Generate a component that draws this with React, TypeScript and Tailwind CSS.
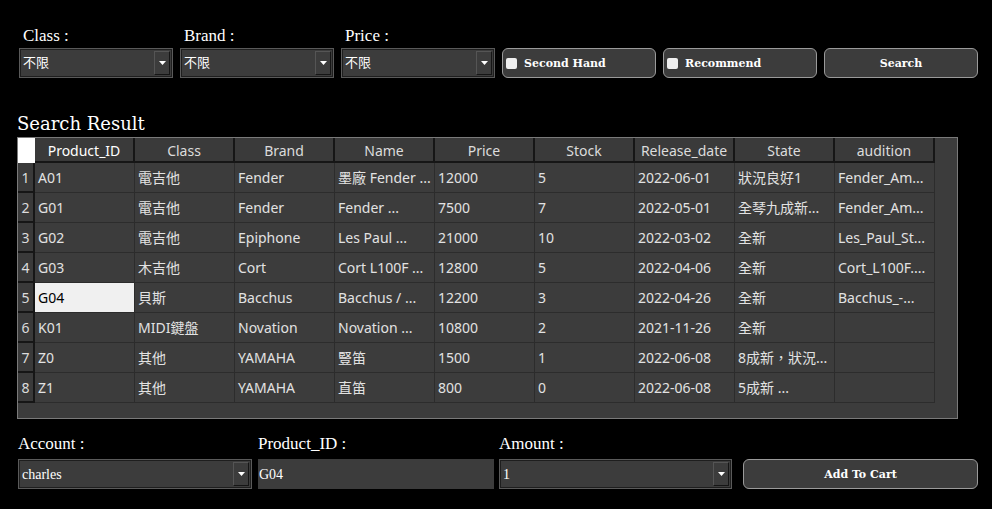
import React from "react";

const serif = { fontFamily: '"Liberation Serif", "Noto Sans CJK TC", serif' };
const bserif = { fontFamily: '"DejaVu Serif", "Liberation Serif", serif' };
const sans = { fontFamily: '"Noto Sans", "Noto Sans CJK TC", sans-serif' };

function Arrow() {
  return (
    <div className="flex h-full w-[16px] items-center justify-center border-l border-t border-l-[#555] border-t-[#555] border-r border-b border-r-[#151515] border-b-[#151515] bg-[#3c3c3c]">
      <svg width="7" height="4" viewBox="0 0 7 4">
        <polygon points="0,0 7,0 3.5,4" fill="#fff" />
      </svg>
    </div>
  );
}

function Combo({ value, width, small }: { value: string; width: string; small?: boolean }) {
  return (
    <div className={`${width} h-[30px] border border-[#5a5a5a] bg-[#5a5a5a]`}>
      <div className="flex h-full items-stretch border border-[#1e1e1e] bg-[#3c3c3c]">
        <div
          className={`flex flex-1 items-center pl-[2px] text-white ${small ? "text-[14px]" : "text-[13px]"}`}
          style={serif}
        >
          {value}
        </div>
        <div className="py-[1px] pr-[1px]">
          <Arrow />
        </div>
      </div>
    </div>
  );
}

function Btn({ label, check, width }: { label: string; check?: boolean; width: string }) {
  return (
    <div
      className={`${width} flex h-[30px] items-center rounded-[6px] border border-[#9a9a9a] bg-[#3c3c3c] text-[11px] font-bold text-white ${
        check ? "justify-start pl-[3px]" : "justify-center"
      }`}
      style={bserif}
    >
      {check && <div className="mr-[7px] h-[11px] w-[11px] rounded-[2px] bg-[#efefef]" />}
      <span className="pt-[2px]">{label}</span>
    </div>
  );
}

const headers = ["Product_ID", "Class", "Brand", "Name", "Price", "Stock", "Release_date", "State", "audition"];
const rows = [
  ["A01", "電吉他", "Fender", "墨廠 Fender ...", "12000", "5", "2022-06-01", "狀況良好1", "Fender_Am..."],
  ["G01", "電吉他", "Fender", "Fender ...", "7500", "7", "2022-05-01", "全琴九成新...", "Fender_Am..."],
  ["G02", "電吉他", "Epiphone", "Les Paul ...", "21000", "10", "2022-03-02", "全新", "Les_Paul_St..."],
  ["G03", "木吉他", "Cort", "Cort L100F ...", "12800", "5", "2022-04-06", "全新", "Cort_L100F...."],
  ["G04", "貝斯", "Bacchus", "Bacchus / ...", "12200", "3", "2022-04-26", "全新", "Bacchus_-..."],
  ["K01", "MIDI鍵盤", "Novation", "Novation ...", "10800", "2", "2021-11-26", "全新", ""],
  ["Z0", "其他", "YAMAHA", "豎笛", "1500", "1", "2022-06-08", "8成新，狀況...", ""],
  ["Z1", "其他", "YAMAHA", "直笛", "800", "0", "2022-06-08", "5成新 ...", ""],
];

export default function App() {
  return (
    <div className="h-[509px] w-[992px] overflow-hidden bg-black">
      {/* Top filters */}
      <div className="flex items-end gap-[7px] pl-[19px] pt-[26px]">
        {[
          ["Class :", "不限"],
          ["Brand :", "不限"],
          ["Price :", "不限"],
        ].map(([l, v]) => (
          <div key={l} className="flex flex-col">
            <div className="h-[22px] pl-[4px] text-[17px] leading-[20px] text-white" style={serif}>
              {l}
            </div>
            <Combo value={v} width="w-[154px]" />
          </div>
        ))}
        <Btn label="Second Hand" check width="w-[154px]" />
        <Btn label="Recommend" check width="w-[154px]" />
        <Btn label="Search" width="w-[154px]" />
      </div>

      {/* Search result */}
      <div className="ml-[17px] mt-[34px] h-[23px]">
        <div className="text-[18px] leading-[24px] text-white" style={{ fontFamily: '"DejaVu Serif", serif' }}>
          Search Result
        </div>
      </div>

      <div className="ml-[17px] mt-[2px] h-[282px] w-[941px] border border-[#7a7a7a] bg-[#3c3c3c]" style={sans}>
        {/* header */}
        <div className="flex h-[25px]">
          <div className="h-full w-[17px] bg-white" />
          {headers.map((h, i) => (
            <div
              key={h}
              className={`flex h-full w-[100px] items-center justify-center border-b-2 border-r-2 border-[#161616] bg-[#3a3a3a] pt-[1px] text-[14px] ${
                i === 0 ? "text-white" : "text-[#dcdcdc]"
              }`}
            >
              {h}
            </div>
          ))}
        </div>
        {rows.map((r, ri) => (
          <div key={ri} className="flex h-[30px]">
            <div className="flex h-full w-[17px] items-center justify-center border-b-2 border-r-2 border-[#161616] bg-[#3a3a3a] text-[14px] text-[#dcdcdc]">
              {ri + 1}
            </div>
            {r.map((c, ci) => {
              const sel = ri === 4 && ci === 0;
              return (
                <div
                  key={ci}
                  className={`flex h-full w-[100px] items-center overflow-hidden whitespace-nowrap border-b border-r border-[#2c2c2c] pl-[3px] text-[14px] ${
                    sel ? "bg-[#f0f0f0] text-black" : "text-[#e2e2e2]"
                  }`}
                >
                  {c}
                </div>
              );
            })}
          </div>
        ))}
      </div>

      {/* Bottom */}
      <div className="mt-[15px] flex items-end pl-[18px]">
        <div className="flex flex-col">
          <div className="h-[25px] text-[17px] leading-[20px] text-white" style={serif}>
            Account :
          </div>
          <Combo value="charles" width="w-[234px]" small />
        </div>
        <div className="ml-[6px] flex flex-col">
          <div className="h-[25px] text-[17px] leading-[20px] text-white" style={serif}>
            Product_ID :
          </div>
          <div className="flex h-[30px] w-[236px] items-center bg-[#3c3c3c] pl-[1px] text-[14px] text-white" style={serif}>
            G04
          </div>
        </div>
        <div className="ml-[5px] flex flex-col">
          <div className="h-[25px] text-[17px] leading-[20px] text-white" style={serif}>
            Amount :
          </div>
          <Combo value="1" width="w-[233px]" small />
        </div>
        <div className="ml-[11px]">
          <Btn label="Add To Cart" width="w-[235px]" />
        </div>
      </div>
    </div>
  );
}
